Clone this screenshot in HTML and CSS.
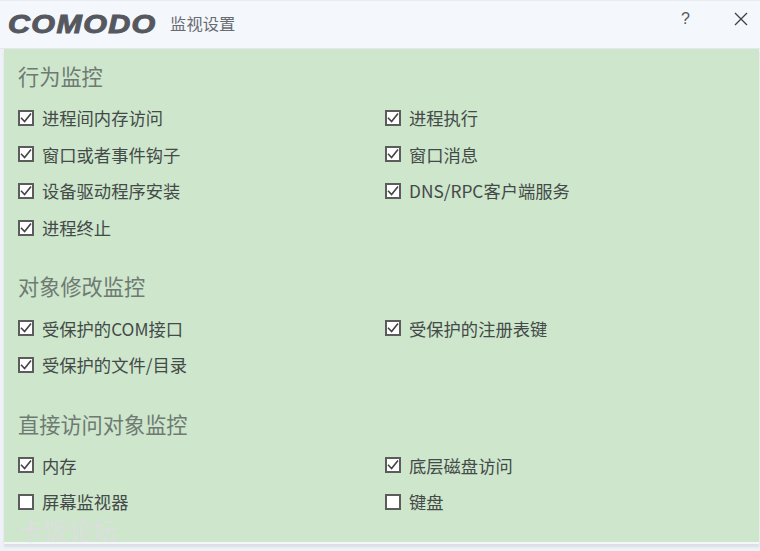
FILE: index.html
```html
<!DOCTYPE html>
<html lang="zh-CN">
<head>
<meta charset="utf-8">
<title>监视设置</title>
<link rel="stylesheet" href="styles.css">
</head>
<body>
<div class="window">
  <header class="titlebar">
    <span class="logo">COMODO</span>
    <span class="title">监视设置</span>
    <span class="spacer"></span>
    <span class="help">?</span>
    <svg class="close" width="16" height="16" viewBox="0 0 16 16"><path d="M2 2 L14 14 M14 2 L2 14" stroke="#3c3f45" stroke-width="1.3" fill="none"/></svg>
  </header>
  <main class="panel">
    <section class="group first">
      <h2>行为监控</h2>
      <div class="grid">
        <label class="item"><span class="box"><svg width="14" height="14" viewBox="0 0 14 14"><path d="M2 6.8 L5.6 10.6 L12 2.6" stroke="#444" stroke-width="1.6" fill="none"/></svg></span>进程间内存访问</label>
        <label class="item"><span class="box"><svg width="14" height="14" viewBox="0 0 14 14"><path d="M2 6.8 L5.6 10.6 L12 2.6" stroke="#444" stroke-width="1.6" fill="none"/></svg></span>进程执行</label>
        <label class="item"><span class="box"><svg width="14" height="14" viewBox="0 0 14 14"><path d="M2 6.8 L5.6 10.6 L12 2.6" stroke="#444" stroke-width="1.6" fill="none"/></svg></span>窗口或者事件钩子</label>
        <label class="item"><span class="box"><svg width="14" height="14" viewBox="0 0 14 14"><path d="M2 6.8 L5.6 10.6 L12 2.6" stroke="#444" stroke-width="1.6" fill="none"/></svg></span>窗口消息</label>
        <label class="item"><span class="box"><svg width="14" height="14" viewBox="0 0 14 14"><path d="M2 6.8 L5.6 10.6 L12 2.6" stroke="#444" stroke-width="1.6" fill="none"/></svg></span>设备驱动程序安装</label>
        <label class="item"><span class="box"><svg width="14" height="14" viewBox="0 0 14 14"><path d="M2 6.8 L5.6 10.6 L12 2.6" stroke="#444" stroke-width="1.6" fill="none"/></svg></span>DNS/RPC客户端服务</label>
        <label class="item"><span class="box"><svg width="14" height="14" viewBox="0 0 14 14"><path d="M2 6.8 L5.6 10.6 L12 2.6" stroke="#444" stroke-width="1.6" fill="none"/></svg></span>进程终止</label>
      </div>
    </section>
    <section class="group">
      <h2>对象修改监控</h2>
      <div class="grid">
        <label class="item"><span class="box"><svg width="14" height="14" viewBox="0 0 14 14"><path d="M2 6.8 L5.6 10.6 L12 2.6" stroke="#444" stroke-width="1.6" fill="none"/></svg></span>受保护的COM接口</label>
        <label class="item"><span class="box"><svg width="14" height="14" viewBox="0 0 14 14"><path d="M2 6.8 L5.6 10.6 L12 2.6" stroke="#444" stroke-width="1.6" fill="none"/></svg></span>受保护的注册表键</label>
        <label class="item"><span class="box"><svg width="14" height="14" viewBox="0 0 14 14"><path d="M2 6.8 L5.6 10.6 L12 2.6" stroke="#444" stroke-width="1.6" fill="none"/></svg></span>受保护的文件/目录</label>
      </div>
    </section>
    <section class="group">
      <h2>直接访问对象监控</h2>
      <div class="grid">
        <label class="item"><span class="box"><svg width="14" height="14" viewBox="0 0 14 14"><path d="M2 6.8 L5.6 10.6 L12 2.6" stroke="#444" stroke-width="1.6" fill="none"/></svg></span>内存</label>
        <label class="item"><span class="box"><svg width="14" height="14" viewBox="0 0 14 14"><path d="M2 6.8 L5.6 10.6 L12 2.6" stroke="#444" stroke-width="1.6" fill="none"/></svg></span>底层磁盘访问</label>
        <label class="item"><span class="box"></span>屏幕监视器</label>
        <label class="item"><span class="box"></span>键盘</label>
      </div>
    </section>
    <div class="watermark">卡饭论坛</div>
  </main>
</div>
</body>
</html>
```

FILE: styles.css
```css
* { box-sizing: border-box; }
html, body { margin: 0; padding: 0; }
body {
  width: 760px;
  height: 551px;
  overflow: hidden;
  background: #eef1f6;
  font-family: "Noto Sans CJK SC", "Liberation Sans", sans-serif;
}
.window {
  width: 760px;
  height: 551px;
  display: flex;
  flex-direction: column;
  background: #eef1f6;
}
.titlebar {
  height: 49px;
  flex: none;
  display: flex;
  align-items: center;
  padding: 0 11px 2px 8px;
  background: #f4f7fb;
  border-top: 1px solid #e8ebf0;
  border-bottom: 1px solid #e4e7ec;
}
.logo {
  font-family: "Liberation Sans", sans-serif;
  font-weight: 700;
  font-style: italic;
  font-size: 26px;
  line-height: 30px;
  letter-spacing: 1.2px;
  color: #55585f;
  -webkit-text-stroke: 1px #55585f;
  transform: scaleX(1.17);
  transform-origin: left center;
}
.title {
  margin-left: 35px;
  margin-bottom: 2px;
  font-size: 16.3px;
  color: #686c72;
}
.spacer { flex: 1; }
.help {
  font-family: "Liberation Sans", sans-serif;
  font-size: 16px;
  color: #55585f;
  margin-right: 43px;
  position: relative;
  top: -5px;
}
.close { position: relative; top: -5px; }
.panel {
  position: relative;
  margin: 0 1px 0 4px;
  height: 495px;
  flex: none;
  background: #cde6cc;
  border-bottom: 2px solid #f4f7f8;
  box-shadow: 0 3px 2px #dcdfe6;
  padding: 0 0 0 14px;
}
.group { margin-top: 26.5px; }
.group.first { margin-top: 13px; }
.group h2 {
  margin: 0;
  font-weight: 400;
  font-size: 21.2px;
  line-height: 28px;
  color: #6f7a73;
}
.grid {
  display: grid;
  grid-template-columns: 367px 367px;
  grid-auto-rows: 36.6px;
  margin-top: 9.5px;
}
.item {
  display: flex;
  align-items: center;
  font-size: 17.3px;
  color: #444a48;
  white-space: nowrap;
}
.box {
  width: 16px;
  height: 16px;
  flex: none;
  margin-right: 8px;
  background: #fff;
  border: 2px solid #5c5c5c;
  display: flex;
  align-items: center;
  justify-content: center;
}
.box svg { display: block; flex: none; }
.watermark {
  position: absolute;
  left: 14px;
  top: 468px;
  font-size: 25px;
  line-height: 24px;
  color: #dcdfdd;
}
```
